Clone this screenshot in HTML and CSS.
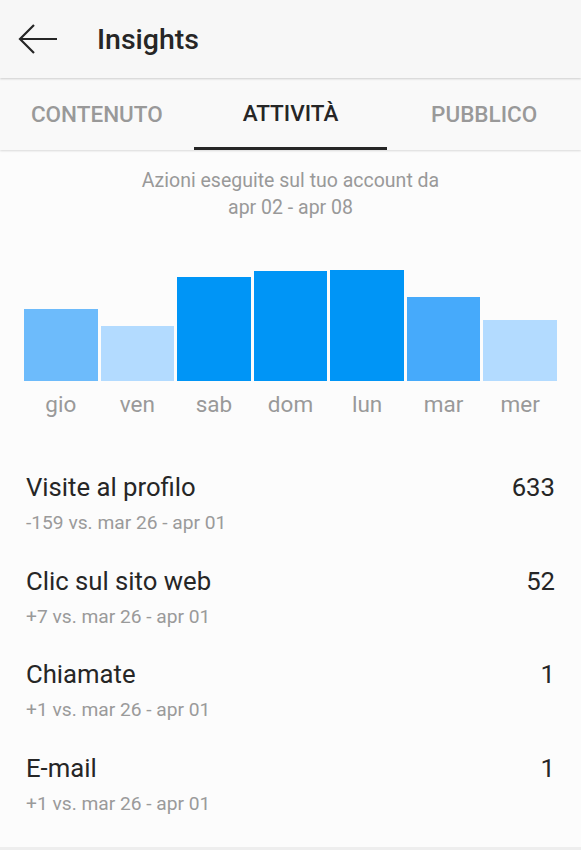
FILE: index.html
```html
<!DOCTYPE html>
<html lang="it">
<head>
<meta charset="utf-8">
<title>Insights</title>
<link rel="stylesheet" href="styles.css">
</head>
<body>
<div class="app">
  <header class="topbar">
    <svg class="back" width="40" height="30" viewBox="0 0 40 30" aria-hidden="true">
      <path d="M39 15H2M16 1L2 15l14 14" fill="none" stroke="#262626" stroke-width="2.2"/>
    </svg>
    <h1 class="title">Insights</h1>
  </header>
  <nav class="tabs">
    <div class="tab">CONTENUTO</div>
    <div class="tab active">ATTIVITÀ</div>
    <div class="tab">PUBBLICO</div>
  </nav>
  <main class="content">
    <p class="intro">Azioni eseguite sul tuo account da<br>apr 02 - apr 08</p>
    <div class="chart">
      <div class="col"><div class="bar c2" style="height:72px"></div><span class="day">gio</span></div>
      <div class="col"><div class="bar c1" style="height:55px"></div><span class="day">ven</span></div>
      <div class="col"><div class="bar c4" style="height:104px"></div><span class="day">sab</span></div>
      <div class="col"><div class="bar c4" style="height:110px"></div><span class="day">dom</span></div>
      <div class="col"><div class="bar c4" style="height:111px"></div><span class="day">lun</span></div>
      <div class="col"><div class="bar c3" style="height:84px"></div><span class="day">mar</span></div>
      <div class="col"><div class="bar c1" style="height:61px"></div><span class="day">mer</span></div>
    </div>
    <ul class="stats">
      <li class="stat"><div class="row"><span class="label">Visite al profilo</span><span class="value">633</span></div><div class="delta">-159 vs. mar 26 - apr 01</div></li>
      <li class="stat"><div class="row"><span class="label">Clic sul sito web</span><span class="value">52</span></div><div class="delta">+7 vs. mar 26 - apr 01</div></li>
      <li class="stat"><div class="row"><span class="label">Chiamate</span><span class="value">1</span></div><div class="delta">+1 vs. mar 26 - apr 01</div></li>
      <li class="stat"><div class="row"><span class="label">E-mail</span><span class="value">1</span></div><div class="delta">+1 vs. mar 26 - apr 01</div></li>
    </ul>
  </main>
</div>
</body>
</html>
```
FILE: styles.css
```css
* { box-sizing: border-box; }
html, body { margin: 0; padding: 0; }
body {
  font-family: Roboto, "Liberation Sans", sans-serif;
  background: #fcfcfc;
  color: #262626;
  width: 581px;
  height: 850px;
  overflow: hidden;
}
.app { display: flex; flex-direction: column; height: 850px; border-bottom: 3px solid #eeeeee; }
.topbar {
  height: 78px;
  display: flex;
  align-items: center;
  padding-left: 18px;
  background: #f7f7f7;
  box-shadow: 0 1px 2px rgba(0,0,0,0.18);
  position: relative;
  z-index: 2;
}
.back { display: block; margin-top: -1px; }
.title {
  margin: 0 0 0 39px;
  font-size: 28.5px;
  font-weight: 500;
  color: #262626;
}
.tabs {
  display: grid;
  grid-template-columns: repeat(3, 1fr);
  height: 71px;
  margin-top: 1px;
  background: #f9f9f9;
  box-shadow: 0 1px 2px rgba(0,0,0,0.14);
  position: relative;
  z-index: 1;
}
.tab {
  display: flex;
  align-items: center;
  justify-content: center;
  font-size: 22.5px;
  font-weight: 500;
  color: #999999;
  padding-bottom: 2px;
}
.tab.active { color: #262626; border-bottom: 3px solid #262626; padding-bottom: 0; }
.content { flex: 1; padding: 17px 24px 0 24px; }
.intro {
  margin: 0;
  text-align: center;
  font-size: 19.5px;
  line-height: 27px;
  color: #999999;
}
.chart {
  margin-top: 49px;
  display: grid;
  grid-template-columns: repeat(7, 1fr);
  column-gap: 3px;
  align-items: end;
}
.col { display: flex; flex-direction: column; align-items: stretch; }
.bar { width: 100%; }
.c1 { background: #b3dbff; }
.c2 { background: #6dbbfb; }
.c3 { background: #46aafb; }
.c4 { background: #0095f6; }
.day {
  text-align: center;
  font-size: 22.5px;
  line-height: 24px;
  margin-top: 11px;
  color: #999999;
}
.stats { list-style: none; margin: 56px 0 0 0; padding: 0 2px; }
.stat { height: 93.5px; }
.row { display: flex; justify-content: space-between; align-items: baseline; }
.label, .value { font-size: 25.7px; line-height: 30px; color: #262626; }
.delta { margin-top: 10px; font-size: 19.2px; line-height: 22px; color: #9a9a9a; }
```
